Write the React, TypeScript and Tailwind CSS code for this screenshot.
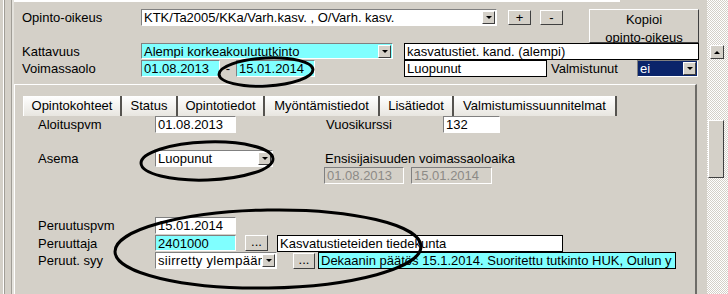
import React from "react";

const sunken =
  "border border-t-[#808080] border-l-[#808080] border-b-white border-r-white";
const raised =
  "border border-t-white border-l-white border-b-[#404040] border-r-[#404040] bg-[#d4d0c8]";

function Arrow() {
  return (
    <span className={`ml-auto mr-[1px] shrink-0 w-[13px] h-[13px] flex items-center justify-center ${raised}`}>
      <span className="w-0 h-0 border-l-[3px] border-r-[3px] border-t-[3px] border-l-transparent border-r-transparent border-t-black" />
    </span>
  );
}

function Label({ children, className = "" }: { children: React.ReactNode; className?: string }) {
  return <span className={`h-[17px] leading-[17px] whitespace-nowrap shrink-0 ${className}`}>{children}</span>;
}

function Box({
  children,
  className = "",
}: {
  children?: React.ReactNode;
  className?: string;
}) {
  return (
    <div className={`shrink-0 flex items-center overflow-hidden whitespace-nowrap pl-[2px] leading-[15px] ${className}`}>
      {children}
    </div>
  );
}

function Btn({ children, className = "" }: { children: React.ReactNode; className?: string }) {
  return (
    <div className={`shrink-0 flex items-center justify-center leading-none ${raised} ${className}`}>{children}</div>
  );
}

const tabs = [
  { t: "Opintokohteet", w: "w-[99px] border-l border-l-white" },
  { t: "Status", w: "w-[56px]" },
  { t: "Opintotiedot", w: "w-[87px]" },
  { t: "Myöntämistiedot", w: "w-[115px]" },
  { t: "Lisätiedot", w: "w-[74px]" },
  { t: "Valmistumissuunnitelmat", w: "w-[163px]" },
];

export default function App() {
  return (
    <div className="relative w-[728px] h-[294px] overflow-hidden bg-[#d4d0c8] flex text-[13px] text-black font-['Liberation_Sans',Arial,sans-serif]">
      {/* vasen reuna */}
      <div className="w-[14px] shrink-0 flex">
        <div className="w-[3px]" />
        <div className="w-px bg-white" />
        <div className="w-px bg-[#a09d96]" />
        <div className="w-[6px]" />
        <div className="w-px bg-[#a09d96]" />
        <div className="w-[2px] bg-[#e4e2dc]" />
      </div>

      {/* sisältö */}
      <div className="w-[693px] shrink-0 flex flex-col">
        <div className="h-[2px] w-[606px] bg-white" />

        <div className="mt-[7px] flex h-[34px]">
          <Label className="ml-[8px] w-[119px]">Opinto-oikeus</Label>
          <Box className={`w-[356px] h-[17px] bg-white ${sunken}`}>
            KTK/Ta2005/KKa/Varh.kasv. , O/Varh. kasv.
            <Arrow />
          </Box>
          <Btn className="ml-[11px] mt-[1px] w-[23px] h-[15px]">+</Btn>
          <Btn className="ml-[9px] mt-[1px] w-[23px] h-[15px]">-</Btn>
          <div className={`ml-[26px] w-[110px] h-[34px] shrink-0 flex flex-col items-center pt-px leading-[17px] ${raised}`}>
            <span>Kopioi</span>
            <span className="mt-[1px]">opinto-oikeus</span>
          </div>
        </div>

        <div className="flex h-[17px]">
          <Label className="ml-[8px] w-[119px]">Kattavuus</Label>
          <Box className={`w-[252px] h-[16px] bg-[#80ffff] ${sunken}`}>
            Alempi korkeakoulututkinto
            <Arrow />
          </Box>
          <Box className="ml-[11px] w-[295px] h-[17px] bg-white border border-black">kasvatustiet. kand. (alempi)</Box>
        </div>

        <div className="flex h-[17px]">
          <Label className="ml-[8px] w-[119px]">Voimassaolo</Label>
          <Box className={`w-[79px] h-[17px] bg-[#80ffff] ${sunken}`}>01.08.2013</Box>
          <span className="w-[16px] text-center leading-[17px]">-</span>
          <Box className={`w-[79px] h-[17px] bg-[#80ffff] ${sunken}`}>15.01.2014</Box>
          <Box className="ml-[89px] w-[143px] h-[17px] bg-white border border-black">Luopunut</Box>
          <Label className="ml-[4px] w-[86px]">Valmistunut</Label>
          <Box className={`w-[61px] h-[17px] bg-[#0a246a] text-white ${sunken}`}>
            ei
            <Arrow />
          </Box>
        </div>

        {/* välilehtipaneeli */}
        <div className="mt-[7px] w-[683px] flex-1 border-t border-l border-white border-r-2 border-r-[#6e6c68] flex flex-col">
          <div className="mt-[11px] ml-[8px] flex h-[20px]">
            {tabs.map((tab) => (
              <div
                key={tab.t}
                className={`${tab.w} shrink-0 flex items-center justify-center border-r-2 border-r-[#55534f] bg-linear-to-b from-white to-[#e8e6e0] leading-[20px]`}
              >
                {tab.t}
              </div>
            ))}
          </div>

          <div className="flex h-[17px]">
            <Label className="ml-[23px] w-[117px]">Aloituspvm</Label>
            <Box className={`w-[81px] h-[17px] bg-white ${sunken}`}>01.08.2013</Box>
            <Label className="ml-[90px] w-[117px]">Vuosikurssi</Label>
            <Box className={`w-[57px] h-[17px] bg-white ${sunken}`}>132</Box>
          </div>

          <div className="mt-[17px] flex items-start">
            <Label className="ml-[23px] w-[117px]">Asema</Label>
            <Box className={`w-[118px] h-[17px] bg-white ${sunken}`}>
              Luopunut
              <Arrow />
            </Box>
            <div className="ml-[51px] flex flex-col">
              <Label className="ml-[1px]">Ensisijaisuuden voimassaoloaika</Label>
              <div className="flex">
                <Box className={`w-[80px] h-[17px] text-[#8c8a86] ${sunken}`}>01.08.2013</Box>
                <Box className={`ml-[7px] w-[81px] h-[17px] text-[#8c8a86] ${sunken}`}>15.01.2014</Box>
              </div>
            </div>
          </div>

          <div className="mt-[33px] flex h-[17px]">
            <Label className="ml-[23px] w-[117px]">Peruutuspvm</Label>
            <Box className={`w-[81px] h-[17px] bg-white ${sunken}`}>15.01.2014</Box>
          </div>
          <div className="mt-px flex h-[17px]">
            <Label className="ml-[23px] w-[117px]">Peruuttaja</Label>
            <Box className={`w-[81px] h-[16px] bg-[#80ffff] ${sunken}`}>2401000</Box>
            <Btn className="ml-[9px] w-[23px] h-[16px] pb-[3px]">...</Btn>
            <Box className="ml-[9px] w-[286px] h-[17px] bg-white border border-black">Kasvatustieteiden tiedekunta</Box>
          </div>
          <div className="flex h-[17px]">
            <Label className="ml-[23px] w-[117px]">Peruut. syy</Label>
            <Box className={`w-[122px] h-[17px] bg-white ${sunken}`}>
              <span className="overflow-hidden tracking-[0.3px]">siirretty ylempään</span>
              <Arrow />
            </Box>
            <Btn className="ml-[16px] mt-px w-[22px] h-[16px] pb-[3px]">...</Btn>
            <Box className="ml-[3px] w-[358px] h-[17px] bg-[#80ffff] border border-black">
              <span className="overflow-hidden">Dekaanin päätös 15.1.2014. Suoritettu tutkinto HUK, Oulun y</span>
            </Box>
          </div>
        </div>
      </div>

      {/* vierityspalkki */}
      <div className="w-[21px] shrink-0 flex flex-col bg-[image:repeating-conic-gradient(#d4d0c8_0_25%,#ffffff_0_50%)] bg-[length:2px_2px]">
        <Btn className="mt-[45px] ml-[3px] w-[14px] h-[14px]">
          <span className="w-0 h-0 border-l-[3px] border-r-[3px] border-b-[3px] border-l-transparent border-r-transparent border-b-black" />
        </Btn>
        <div className={`mt-[61px] ml-[1px] w-[16px] h-[58px] ${raised}`} />
      </div>

      {/* merkinnät */}
      <svg className="absolute inset-0 pointer-events-none" width="728" height="294" viewBox="0 0 728 294">
        <g fill="none" stroke="#000" strokeWidth="3">
          <ellipse cx="266" cy="72" rx="47" ry="14" transform="rotate(-3 266 72)" />
          <ellipse cx="207" cy="161" rx="66" ry="19" transform="rotate(-2 207 161)" />
          <ellipse cx="268" cy="249" rx="153" ry="39" transform="rotate(-1 268 249)" />
        </g>
      </svg>
    </div>
  );
}
